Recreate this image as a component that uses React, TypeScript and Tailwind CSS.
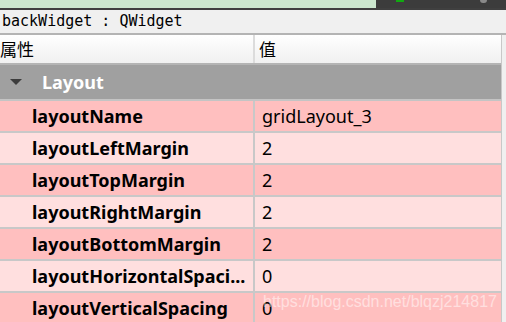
const rows = [
  { name: 'layoutName', value: 'gridLayout_3' },
  { name: 'layoutLeftMargin', value: '2' },
  { name: 'layoutTopMargin', value: '2' },
  { name: 'layoutRightMargin', value: '2' },
  { name: 'layoutBottomMargin', value: '2' },
  { name: 'layoutHorizontalSpaci...', value: '0' },
  { name: 'layoutVerticalSpacing', value: '0' },
];

export default function App() {
  return (
    <div className="relative h-[322px] w-[506px] overflow-hidden bg-[#f0f0f0] font-['Noto_Sans','Noto_Sans_CJK_SC',sans-serif] text-black">
      {/* window strip on top */}
      <div className="flex h-[8px]">
        <div className="w-[376px] bg-[#cce8cf]" />
        <div className="flex flex-1 bg-[#3c3c3c]">
          <div className="ml-[20px] h-[2px] w-[8px] bg-[#11a811]" />
          <div className="ml-[76px] h-[3px] w-[7px] rounded-b bg-[#8a8a8a]" />
        </div>
      </div>
      <div className="h-[2px] bg-[#404040]" />

      <div className="flex h-[23px] items-center pl-[2px] font-['DejaVu_Sans_Mono',monospace] text-[15px] leading-none">
        backWidget : QWidget
      </div>
      <div className="h-[2px] bg-[#b4b4b4]" />

      <div className="w-[502px] border-r border-[#c8c8c8]">
        {/* header */}
        <div className="flex h-[28px] bg-gradient-to-b from-white to-[#f0f0f0] text-[17px] leading-none">
          <div className="flex w-[253px] items-center">属性</div>
          <div className="flex flex-1 items-center border-l-2 border-[#dcdcdc] pl-[4px]">值</div>
        </div>
        <div className="h-[2px] bg-[#b4b4b4]" />

        {/* group row */}
        <div className="flex h-[34px] items-center bg-[#a0a0a0]">
          <svg width="12" height="6" viewBox="0 0 12 6" className="ml-[10px]">
            <polygon points="0,0 12,0 6,6" fill="#3c3c3c" />
          </svg>
          <span className="ml-[20px] text-[18px] font-bold text-white">Layout</span>
        </div>
        <div className="h-[2px] bg-[#c4c4c4]" />

        {rows.map((row, i) => (
          <div
            key={row.name}
            className={`flex h-[32px] border-b-2 border-[#c8c8c8] ${i % 2 === 0 ? 'bg-[#ffbfbf]' : 'bg-[#ffdfdf]'}`}
          >
            <div className="flex w-[253px] items-center overflow-hidden whitespace-nowrap pl-[32px] text-[18px] font-bold">
              {row.name}
            </div>
            <div className="flex flex-1 items-center border-l-2 border-[#c8c8c8] pl-[7px] text-[18px]">
              {row.value}
            </div>
          </div>
        ))}
      </div>

      <div className="absolute left-[263px] top-[290px] whitespace-nowrap font-['Liberation_Sans',sans-serif] text-[16px] text-white/50">
        https://blog.csdn.net/blqzj214817
      </div>
    </div>
  );
}
